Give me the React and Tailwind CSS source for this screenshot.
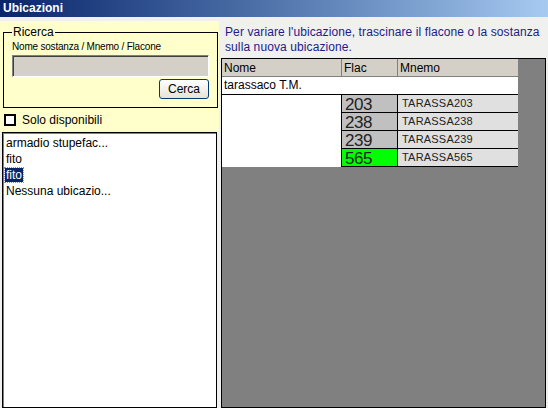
import React from "react";

const rows = [
  { flac: "203", mnemo: "TARASSA203", bg: "bg-[#c0c0c0]" },
  { flac: "238", mnemo: "TARASSA238", bg: "bg-[#c0c0c0]" },
  { flac: "239", mnemo: "TARASSA239", bg: "bg-[#c0c0c0]" },
  { flac: "565", mnemo: "TARASSA565", bg: "bg-[#00ff00]" },
];

const items = ["armadio stupefac...", "fito", "fito", "Nessuna ubicazio..."];

export default function App() {
  return (
    <div className="w-[548px] h-[408px] bg-[#f0f0ee] flex flex-col overflow-hidden font-['Liberation_Sans',Arial,sans-serif] text-black">
      {/* title bar */}
      <div className="h-[17px] shrink-0 bg-gradient-to-r from-[#0a246a] to-[#a6caf0] px-[3px] text-[12px] font-bold text-white leading-[16px]">
        Ubicazioni
      </div>

      <div className="flex flex-1 min-h-0 pt-[4px]">
        {/* left column */}
        <div className="w-[219px] shrink-0 flex flex-col">
          <div className="bg-[#ffffcc] pt-[4px] pb-[4px] pl-[3px] pr-[1px]">
            <div className="relative border border-black pt-[8px] px-[8px] pb-[8px] mt-[7px]">
              <span className="absolute left-[8px] -top-[8px] bg-[#ffffcc] px-[1px] text-[12px] leading-[14px]">
                Ricerca
              </span>
              <div className="text-[10px] leading-[12px] tracking-[-0.2px]">Nome sostanza / Mnemo / Flacone</div>
              <div className="mt-[2px] h-[22px] bg-[#d4d0c8] border border-[#808080] border-r-white border-b-white shadow-[inset_1px_1px_0_#404040]"></div>
              <div className="flex justify-end mt-[2px]">
                <button className="w-[50px] h-[20px] rounded-[3px] border border-[#003c74] bg-gradient-to-b from-white to-[#e6e3d6] text-[12px] leading-[16px]">
                  Cerca
                </button>
              </div>
            </div>
            <div className="flex items-center gap-[6px] mt-[5px] pl-[1px]">
              <div className="w-[12px] h-[12px] border-2 border-black bg-white"></div>
              <span className="text-[12px] leading-[14px]">Solo disponibili</span>
            </div>
          </div>
          <div className="flex-1 mx-[2px] mt-[1px] border border-black bg-white shadow-[inset_1px_1px_0_#808080] pt-[2px] px-[2px] text-[12px] leading-[16px]">
            {items.map((t, i) => (
              <div key={i}>
                {i === 2 ? (
                  <span className="bg-[#0a246a] text-white outline outline-1 outline-dotted outline-[#8c8cb4] px-[1px]">{t}</span>
                ) : (
                  <span className="px-[1px]">{t}</span>
                )}
              </div>
            ))}
          </div>
        </div>

        {/* right column */}
        <div className="flex-1 flex flex-col pl-[2px] pr-[2px]">
          <div className="pl-[4px] pt-[4px] text-[12px] leading-[15px] tracking-[0.1px] text-[#1c1c8a] h-[37px]">
            Per variare l'ubicazione, trascinare il flacone o la sostanza sulla nuova ubicazione.
          </div>
          <div className="flex-1 bg-[#808080] border border-black">
            <div className="w-[296px]">
              <div className="flex h-[18px] bg-[#d4d0c8] text-[12px] leading-[18px]">
                <div className="w-[120px] border-r border-b border-[#808080] pl-[2px]">Nome</div>
                <div className="w-[56px] border-r border-b border-[#808080] pl-[2px]">Flac</div>
                <div className="flex-1 border-b border-[#808080] pl-[2px]">Mnemo</div>
              </div>
              <div className="h-[18px] bg-white border-b border-black text-[12px] leading-[17px] pl-[2px]">
                tarassaco T.M.
              </div>
              <div className="flex bg-white">
                <div className="w-[120px] border-r border-black"></div>
                <div className="flex-1">
                  {rows.map((r) => (
                    <div key={r.flac} className="flex h-[18px] border-b border-black">
                      <div className={`w-[56px] ${r.bg} border-r border-black pl-[3px] text-[17px] leading-[19px] tracking-[-0.5px] text-[#222]`}>
                        {r.flac}
                      </div>
                      <div className="flex-1 bg-[#e0e0e0] pl-[4px] text-[11px] leading-[17px] tracking-[0.2px] text-[#222]">
                        {r.mnemo}
                      </div>
                    </div>
                  ))}
                </div>
              </div>
            </div>
          </div>
        </div>
      </div>
    </div>
  );
}
